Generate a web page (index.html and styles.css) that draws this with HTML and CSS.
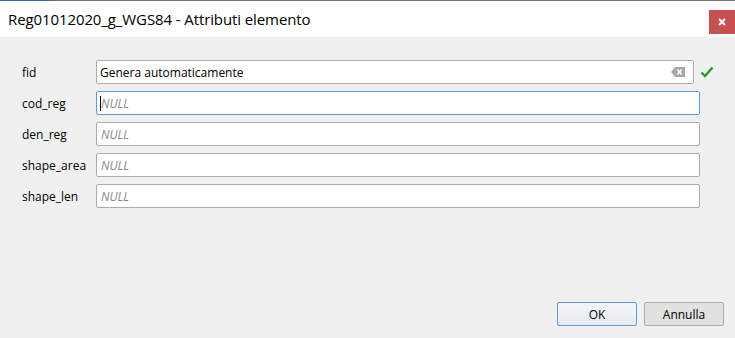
FILE: index.html
```html
<!DOCTYPE html>
<html>
  <head>
    <meta charset="utf-8" />
    <title>Reg01012020_g_WGS84 - Attributi elemento</title>
    <link rel="stylesheet" href="styles.css">
  </head>
  <body>
    <div class="topline"><span class="topline-blue"></span></div>

    <div class="titlebar">
      <span class="title">Reg01012020_g_WGS84 - Attributi elemento</span>
      <button class="close" title="Chiudi">
        <svg width="10" height="10" viewBox="0 0 10 10">
          <path d="M2 2 L8 8 M8 2 L2 8" stroke="#fff" stroke-width="2" />
        </svg>
      </button>
    </div>

    <div class="content">
      <div class="form">
        <div class="row">
          <label class="lbl">fid</label>
          <div class="field field-fid">
            <span class="value">Genera automaticamente</span>
            <svg class="clear" width="14" height="10" viewBox="0 0 14 10">
              <path d="M0 5 L4 0 H14 V10 H4 Z" fill="#a8a8a8" />
              <path d="M6.5 2.5 L10.5 7.5 M10.5 2.5 L6.5 7.5" stroke="#fff" stroke-width="1.4" />
            </svg>
          </div>
          <svg class="check" width="14" height="12" viewBox="0 0 14 12">
            <path d="M1.5 6.5 L5 10 L12.5 1.5" stroke="#2a9a2a" stroke-width="2.4" fill="none" />
          </svg>
        </div>
        <div class="row">
          <label class="lbl">cod_reg</label>
          <div class="field focus"><span class="caret"></span><span class="null">NULL</span></div>
        </div>
        <div class="row">
          <label class="lbl">den_reg</label>
          <div class="field"><span class="null">NULL</span></div>
        </div>
        <div class="row">
          <label class="lbl">shape_area</label>
          <div class="field"><span class="null">NULL</span></div>
        </div>
        <div class="row">
          <label class="lbl">shape_len</label>
          <div class="field"><span class="null">NULL</span></div>
        </div>
      </div>

      <div class="buttons">
        <button class="btn btn-default">OK</button>
        <button class="btn">Annulla</button>
      </div>
    </div>
  </body>
</html>
```

FILE: styles.css
```css
html, body {
  margin: 0;
  padding: 0;
}
body {
  width: 735px;
  height: 338px;
  background: #f0f0f0;
  font-family: "Open Sans", "Noto Sans", sans-serif;
  color: #000;
  overflow: hidden;
}

.topline {
  height: 1px;
  background: #6e6e6e;
  display: flex;
}
.topline-blue {
  width: 52px;
  background: #3a6ea5;
}

.titlebar {
  height: 36px;
  background: #fff;
  display: flex;
  align-items: center;
  justify-content: space-between;
}
.title {
  font-size: 15px;
  padding-left: 8px;
  margin-top: -1px;
  letter-spacing: -0.1px;
}
.close {
  width: 26px;
  height: 24px;
  margin-top: 9px;
  align-self: flex-start;
  border: none;
  padding: 0;
  background: #c75050;
  display: flex;
  align-items: center;
  justify-content: center;
}

.content {
  height: 301px;
  display: flex;
  flex-direction: column;
  justify-content: space-between;
}

.form {
  padding: 23px 0 0 22px;
  display: flex;
  flex-direction: column;
  gap: 7px;
}
.row {
  display: flex;
  align-items: center;
  height: 24px;
}
.lbl {
  width: 74px;
  font-size: 12px;
}
.field {
  box-sizing: border-box;
  width: 604px;
  height: 24px;
  background: #fff;
  border: 1px solid #acacac;
  border-radius: 2px;
  display: flex;
  align-items: center;
  padding: 0 3px;
  font-size: 12px;
}
.field-fid {
  width: 598px;
  justify-content: space-between;
  padding-right: 8px;
}
.focus {
  border-color: #5b9de0;
}
.caret {
  width: 1px;
  height: 15px;
  background: #000;
  margin-right: -1px;
}
.null {
  color: #8a8a8a;
  font-style: italic;
  padding-left: 1px;
}
.check {
  margin-left: 6px;
}

.buttons {
  display: flex;
  justify-content: flex-end;
  gap: 7px;
  padding: 0 11px 12px 0;
}
.btn {
  box-sizing: border-box;
  width: 80px;
  height: 24px;
  font-family: "Open Sans", "Noto Sans", sans-serif;
  font-size: 12px;
  background: #e1e1e1;
  border: 1px solid #adadad;
  border-radius: 2px;
  padding: 0;
}
.btn-default {
  background: linear-gradient(#f4f6f9, #e6ebf1);
  border-color: #5b9de0;
}
```
